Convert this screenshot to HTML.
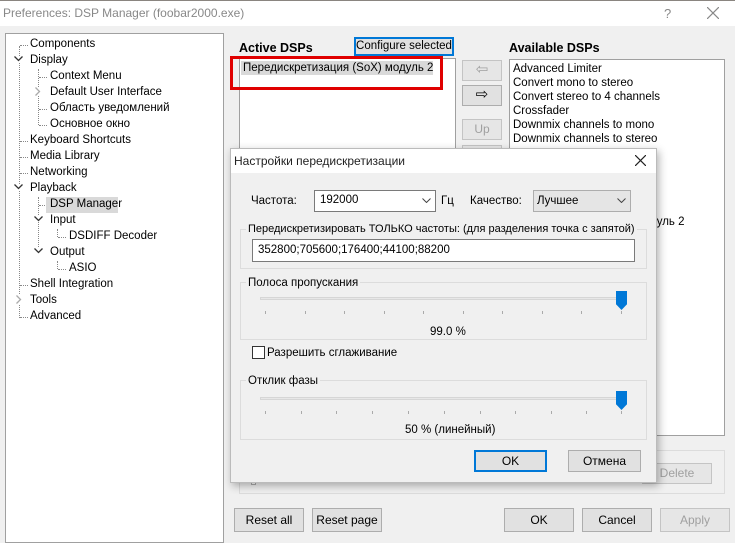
<!DOCTYPE html>
<html><head><meta charset="utf-8"><style>
*{box-sizing:border-box;margin:0;padding:0}
body{width:735px;height:538px;overflow:hidden;background:#f0f0f0;font-family:"Liberation Sans","DejaVu Sans",sans-serif;font-size:11.5px;color:#000;position:relative}
.a{position:absolute;white-space:nowrap}
.btn{position:absolute;background:#e1e1e1;border:1px solid #adadad;text-align:center;font-size:12px}
.dis{color:#a0a0a0;background:#e6e6e6;border-color:#c4c4c4}
.tree div{position:absolute;white-space:nowrap;font-size:11.5px}
.tree svg{position:absolute}
.dot{position:absolute;border-left:1px dotted #888}
.hd{position:absolute;border-top:1px dotted #888;width:8px}
.grp{position:absolute;border:1px solid #dcdcdc}
.leg{position:absolute;background:#f0f0f0;padding:0 2px;white-space:nowrap}
.tick{position:absolute;width:1px;height:3px;background:#aaa}
</style></head><body>
<div class="a" style="left:0;top:0;width:735px;height:26px;background:#fff;border-top:1px solid #8a8580"></div>
<div class="a" style="left:3px;top:6px;font-size:12px;color:#888">Preferences: DSP Manager (foobar2000.exe)</div>
<div class="a" style="left:664px;top:6px;font-size:13px;color:#888">?</div>
<svg class="a" style="left:707px;top:7px" width="12" height="12"><path d="M0 0L12 12M12 0L0 12" stroke="#888" stroke-width="1.2"/></svg>

<div class="a" style="left:5px;top:33px;width:219px;height:510px;background:#fff;border:1px solid #a0a0a0"></div>
<div class="tree">
<div class="dot" style="left:19px;top:46px;height:272px"></div>
<div class="dot" style="left:38px;top:69px;height:56px"></div>
<div class="dot" style="left:38px;top:197px;height:56px"></div>
<div class="dot" style="left:57px;top:229px;height:8px"></div>
<div class="dot" style="left:57px;top:261px;height:8px"></div>
<div class="hd" style="left:20px;top:45px"></div><div style="left:30px;top:38px">Components</div>
<svg style="left:14px;top:56px;background:#fff" width="9" height="6"><path d="M0.5 0.5L4.5 4.5L8.5 0.5" stroke="#333" stroke-width="1.3" fill="none"/></svg><div style="left:30px;top:54px">Display</div>
<div class="hd" style="left:39px;top:77px"></div><div style="left:50px;top:70px">Context Menu</div>
<svg style="left:35px;top:87px;background:#fff" width="6" height="9"><path d="M0.5 0.5L4.5 4.5L0.5 8.5" stroke="#aaa" stroke-width="1.3" fill="none"/></svg><div style="left:50px;top:86px">Default User Interface</div>
<div class="hd" style="left:39px;top:109px"></div><div style="left:50px;top:102px">Область уведомлений</div>
<div class="hd" style="left:39px;top:125px"></div><div style="left:50px;top:118px">Основное окно</div>
<div class="hd" style="left:20px;top:141px"></div><div style="left:30px;top:134px">Keyboard Shortcuts</div>
<div class="hd" style="left:20px;top:157px"></div><div style="left:30px;top:150px">Media Library</div>
<div class="hd" style="left:20px;top:173px"></div><div style="left:30px;top:166px">Networking</div>
<svg style="left:14px;top:184px;background:#fff" width="9" height="6"><path d="M0.5 0.5L4.5 4.5L8.5 0.5" stroke="#333" stroke-width="1.3" fill="none"/></svg><div style="left:30px;top:182px">Playback</div>
<div class="hd" style="left:39px;top:205px"></div><div style="left:46px;top:197px;width:72px;height:16px;background:#d9d9d9"></div><div style="left:50px;top:198px">DSP Manager</div>
<svg style="left:34px;top:216px;background:#fff" width="9" height="6"><path d="M0.5 0.5L4.5 4.5L8.5 0.5" stroke="#333" stroke-width="1.3" fill="none"/></svg><div style="left:50px;top:214px">Input</div>
<div class="hd" style="left:58px;top:237px"></div><div style="left:69px;top:230px">DSDIFF Decoder</div>
<svg style="left:34px;top:248px;background:#fff" width="9" height="6"><path d="M0.5 0.5L4.5 4.5L8.5 0.5" stroke="#333" stroke-width="1.3" fill="none"/></svg><div style="left:50px;top:246px">Output</div>
<div class="hd" style="left:58px;top:269px"></div><div style="left:69px;top:262px">ASIO</div>
<div class="hd" style="left:20px;top:285px"></div><div style="left:30px;top:278px">Shell Integration</div>
<svg style="left:16px;top:295px;background:#fff" width="6" height="9"><path d="M0.5 0.5L4.5 4.5L0.5 8.5" stroke="#aaa" stroke-width="1.3" fill="none"/></svg><div style="left:30px;top:294px">Tools</div>
<div class="hd" style="left:20px;top:317px"></div><div style="left:30px;top:310px">Advanced</div>
</div>

<div class="a" style="left:239px;top:41px;font-weight:bold;font-size:12.5px">Active DSPs</div>
<div class="btn" style="left:354px;top:37px;width:100px;height:19px;border:2px solid #0078d7;line-height:15px;font-size:11.5px">Configure selected</div>
<div class="a" style="left:239px;top:58px;width:217px;height:400px;background:#fff;border:1px solid #a0a0a0"></div>
<div class="a" style="left:241px;top:61px;width:192px;height:14px;background:#d9d9d9"></div>
<div class="a" style="left:243px;top:62px">Передискретизация (SoX) модуль 2</div>
<div class="a" style="left:230px;top:56px;width:213px;height:34px;border:3px solid #e00000"></div>

<div class="btn dis" style="left:462px;top:60px;width:40px;height:21px;font-size:15px;line-height:17px">⇦</div>
<div class="btn" style="left:462px;top:85px;width:40px;height:21px;font-size:15px;line-height:17px">⇨</div>
<div class="btn dis" style="left:462px;top:119px;width:40px;height:21px;line-height:19px">Up</div>
<div class="btn dis" style="left:462px;top:145px;width:40px;height:21px"></div>

<div class="a" style="left:509px;top:41px;font-weight:bold;font-size:12.5px">Available DSPs</div>
<div class="a" style="left:509px;top:59px;width:216px;height:377px;background:#fff;border:1px solid #a0a0a0"></div>
<div class="a" style="left:513px;top:62px;line-height:14px">Advanced Limiter<br>Convert mono to stereo<br>Convert stereo to 4 channels<br>Crossfader<br>Downmix channels to mono<br>Downmix channels to stereo</div>
<div class="a" style="left:650px;top:216px">дуль 2</div>

<div class="grp" style="left:239px;top:450px;width:486px;height:44px"></div>
<div class="btn dis" style="left:642px;top:463px;width:70px;height:21px;line-height:19px">Delete</div>
<div class="btn" style="left:251px;top:465px;width:5px;height:20px;background:#fff"></div>

<div class="btn" style="left:234px;top:508px;width:70px;height:24px;line-height:22px">Reset all</div>
<div class="btn" style="left:312px;top:508px;width:70px;height:24px;line-height:22px">Reset page</div>
<div class="btn" style="left:504px;top:508px;width:70px;height:24px;line-height:22px">OK</div>
<div class="btn" style="left:582px;top:508px;width:70px;height:24px;line-height:22px">Cancel</div>
<div class="btn dis" style="left:660px;top:508px;width:70px;height:24px;line-height:22px">Apply</div>

<!-- dialog -->
<div class="a" style="left:230px;top:148px;width:427px;height:335px;background:#f0f0f0;border:1px solid #bbb;box-shadow:2px 3px 8px rgba(0,0,0,.3)"></div>
<div class="a" style="left:231px;top:149px;width:425px;height:24px;background:#fff"></div>
<div class="a" style="left:234px;top:154px;font-size:12px;color:#222">Настройки передискретизации</div>
<svg class="a" style="left:635px;top:155px" width="11" height="11"><path d="M0 0L11 11M11 0L0 11" stroke="#222" stroke-width="1.2"/></svg>

<div class="a" style="left:251px;top:195px">Частота:</div>
<div class="a" style="left:314px;top:190px;width:122px;height:22px;background:#fff;border:1px solid #7a7a7a"></div>
<div class="a" style="left:320px;top:194px">192000</div>
<svg class="a" style="left:422px;top:198px" width="9" height="5"><path d="M0.5 0.5L4.5 4.5L8.5 0.5" stroke="#444" fill="none"/></svg>
<div class="a" style="left:441px;top:195px">Гц</div>
<div class="a" style="left:470px;top:195px">Качество:</div>
<div class="a" style="left:533px;top:190px;width:98px;height:22px;background:#e5e5e5;border:1px solid #adadad"></div>
<div class="a" style="left:537px;top:195px">Лучшее</div>
<svg class="a" style="left:617px;top:198px" width="9" height="5"><path d="M0.5 0.5L4.5 4.5L8.5 0.5" stroke="#444" fill="none"/></svg>

<div class="grp" style="left:240px;top:229px;width:407px;height:40px"></div>
<div class="leg" style="left:246px;top:223px;font-size:11px">Передискретизировать ТОЛЬКО частоты: (для разделения точка с запятой)</div>
<div class="a" style="left:252px;top:239px;width:383px;height:23px;background:#fff;border:1px solid #7a7a7a"></div>
<div class="a" style="left:258px;top:244px">352800;705600;176400;44100;88200</div>

<div class="grp" style="left:240px;top:282px;width:407px;height:58px"></div>
<div class="leg" style="left:246px;top:277px">Полоса пропускания</div>
<div class="a" style="left:260px;top:297px;width:365px;height:3px;background:#e7e7e7;border:1px solid #d6d6d6"></div>
<div class="a" style="left:616px;top:291px;width:11px;height:19px;background:#0078d7;clip-path:polygon(0 0,100% 0,100% 70%,50% 100%,0 70%)"></div>
<div class="tick" style="left:265px;top:311px"></div><div class="tick" style="left:305px;top:311px"></div><div class="tick" style="left:344px;top:311px"></div><div class="tick" style="left:384px;top:311px"></div><div class="tick" style="left:423px;top:311px"></div><div class="tick" style="left:463px;top:311px"></div><div class="tick" style="left:502px;top:311px"></div><div class="tick" style="left:542px;top:311px"></div><div class="tick" style="left:581px;top:311px"></div><div class="tick" style="left:621px;top:311px"></div>
<div class="a" style="left:430px;top:326px">99.0 %</div>

<div class="a" style="left:252px;top:346px;width:13px;height:13px;background:#fff;border:1px solid #333"></div>
<div class="a" style="left:267px;top:347px">Разрешить сглаживание</div>

<div class="grp" style="left:240px;top:380px;width:407px;height:60px"></div>
<div class="leg" style="left:246px;top:375px">Отклик фазы</div>
<div class="a" style="left:260px;top:397px;width:365px;height:3px;background:#e7e7e7;border:1px solid #d6d6d6"></div>
<div class="a" style="left:616px;top:391px;width:11px;height:19px;background:#0078d7;clip-path:polygon(0 0,100% 0,100% 70%,50% 100%,0 70%)"></div>
<div class="tick" style="left:265px;top:411px"></div><div class="tick" style="left:301px;top:411px"></div><div class="tick" style="left:336px;top:411px"></div><div class="tick" style="left:372px;top:411px"></div><div class="tick" style="left:408px;top:411px"></div><div class="tick" style="left:444px;top:411px"></div><div class="tick" style="left:480px;top:411px"></div><div class="tick" style="left:515px;top:411px"></div><div class="tick" style="left:551px;top:411px"></div><div class="tick" style="left:586px;top:411px"></div><div class="tick" style="left:621px;top:411px"></div>
<div class="a" style="left:405px;top:424px">50 % (линейный)</div>

<div class="btn" style="left:474px;top:450px;width:73px;height:22px;border:2px solid #0078d7;line-height:18px">OK</div>
<div class="btn" style="left:568px;top:450px;width:73px;height:22px;line-height:20px">Отмена</div>
</body></html>
